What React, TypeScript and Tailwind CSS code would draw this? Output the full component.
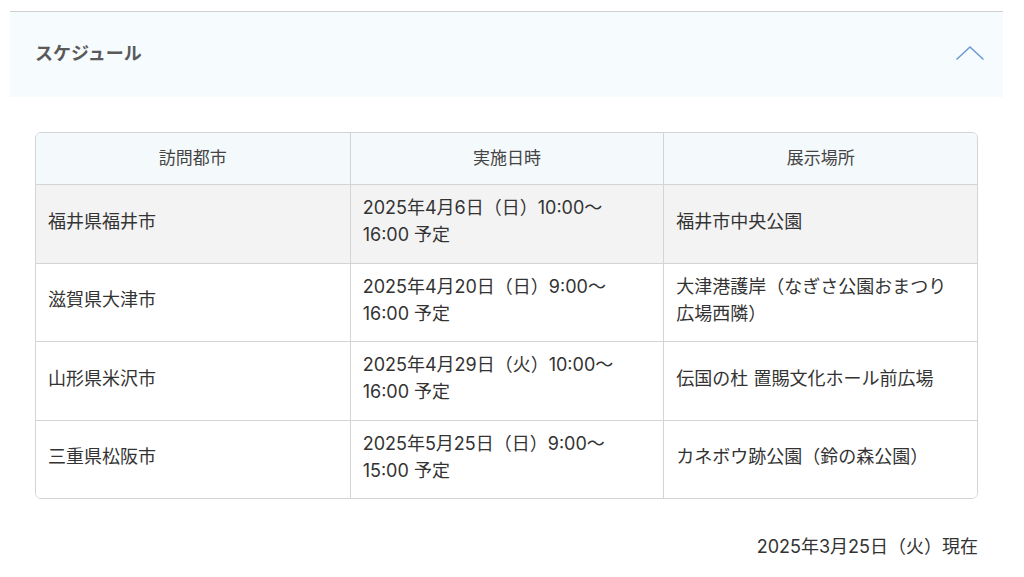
import React from "react";

interface ScheduleRow {
  id: string;
  city: string;
  date: string[];
  place: string[];
}

const rows: ScheduleRow[] = [
  {
    id: "1",
    city: "福井県福井市",
    date: ["2025年4月6日（日）10:00〜", "16:00 予定"],
    place: ["福井市中央公園"],
  },
  {
    id: "2",
    city: "滋賀県大津市",
    date: ["2025年4月20日（日）9:00〜", "16:00 予定"],
    place: ["大津港護岸（なぎさ公園おまつり", "広場西隣）"],
  },
  {
    id: "3",
    city: "山形県米沢市",
    date: ["2025年4月29日（火）10:00〜", "16:00 予定"],
    place: ["伝国の杜 置賜文化ホール前広場"],
  },
  {
    id: "4",
    city: "三重県松阪市",
    date: ["2025年5月25日（日）9:00〜", "15:00 予定"],
    place: ["カネボウ跡公園（鈴の森公園）"],
  },
];

const Lines = ({ lines }: { lines: string[] }) => (
  <div>
    {lines.map((l, i) => (
      <div key={i}>{l}</div>
    ))}
  </div>
);

const App = () => {
  return (
    <div
      className="w-[1024px] h-[577px] bg-white pt-[11px] pl-[10px] pr-[21px] text-[#333]"
      style={{ fontFamily: 'Inter, "Noto Sans CJK JP", "Noto Sans", sans-serif' }}
    >
      <div className="border-t border-[#cfcfcf]">
        <div className="h-[85px] bg-[#f6fbfe] flex items-center justify-between pl-[25px] pr-[18px] pb-[3px]">
          <div className="text-[18px] font-bold text-[#5a5a5a]">スケジュール</div>
          <svg width="30" height="16" viewBox="0 0 30 16" fill="none">
            <path d="M1.5 14.5 L15 2 L28.5 14.5" stroke="#6b97d2" strokeWidth="1.5" />
          </svg>
        </div>
      </div>

      <div className="mx-[25px] mt-[35px] border border-[#d4d4d4] rounded-[6px] overflow-hidden text-[18px] leading-[27px]">
        <div className="grid grid-cols-3 h-[51px] bg-[#f4f9fc] text-[17px] text-[#444]">
          <div className="flex items-center justify-center">訪問都市</div>
          <div className="flex items-center justify-center border-l border-[#d4d4d4]">実施日時</div>
          <div className="flex items-center justify-center border-l border-[#d4d4d4]">展示場所</div>
        </div>
        {rows.map((r, i) => (
          <div
            key={r.id}
            className={`grid grid-cols-3 h-[78.5px] border-t border-[#d4d4d4] ${
              i === 0 ? "bg-[#f3f3f3]" : "bg-white"
            }`}
          >
            <div className="flex items-center px-3 pb-[5px]">{r.city}</div>
            <div className="flex items-center px-3 pb-[5px] border-l border-[#d4d4d4]">
              <Lines lines={r.date} />
            </div>
            <div className="flex items-center px-3 pb-[5px] border-l border-[#d4d4d4]">
              <Lines lines={r.place} />
            </div>
          </div>
        ))}
      </div>

      <div className="mx-[25px] mt-[34px] text-right text-[18px]">2025年3月25日（火）現在</div>
    </div>
  );
};

export default App;
